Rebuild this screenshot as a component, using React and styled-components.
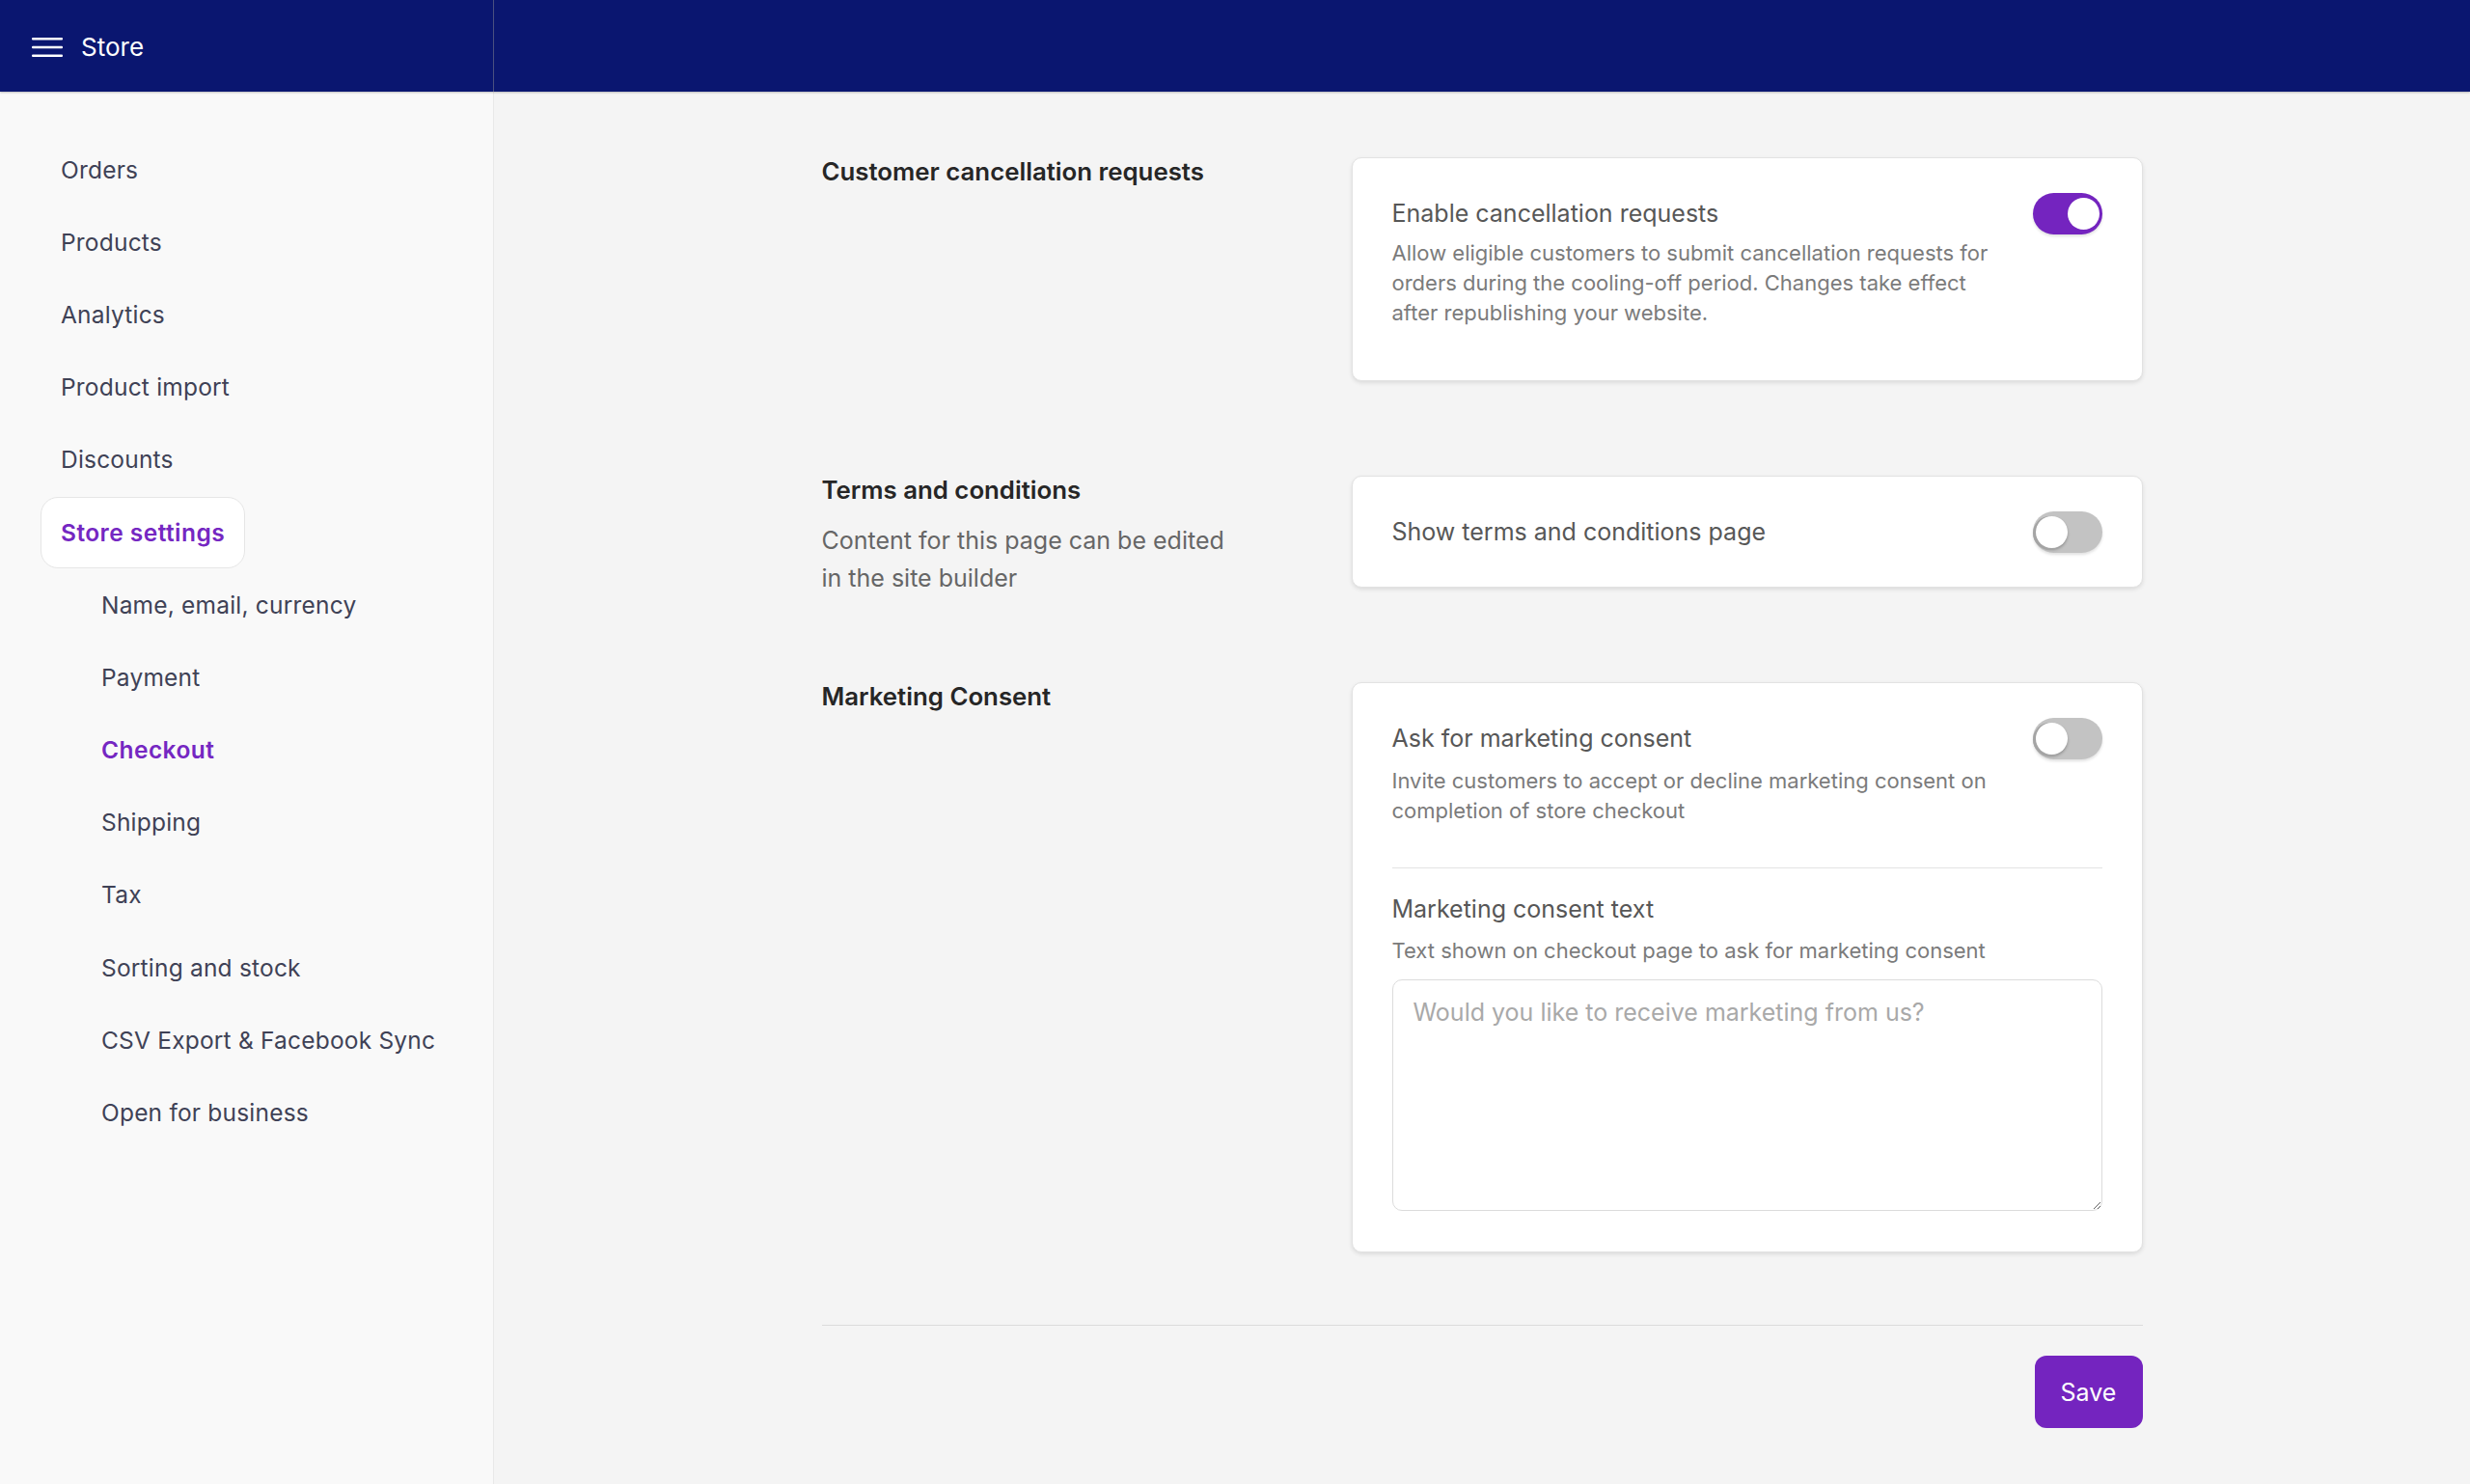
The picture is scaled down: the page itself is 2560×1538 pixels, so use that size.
import React from "react";
import styled, { createGlobalStyle } from "styled-components";

const GlobalStyle = createGlobalStyle`
  * { box-sizing: border-box; }
  html, body { margin: 0; padding: 0; }
  body {
    font-family: Inter, "Noto Sans", "Liberation Sans", sans-serif;
    background: #f4f4f4;
    color: #333;
  }
`;

const Page = styled.div`
  display: grid;
  grid-template-rows: 95px 1fr;
  min-height: 100vh;
`;

const Header = styled.header`
  display: grid;
  grid-template-columns: 512px 1fr;
  background: #0a1670;
  box-shadow: 0 1px 2px rgba(0, 0, 0, 0.25);
  position: relative;
  z-index: 2;
`;

const Brand = styled.div`
  display: flex;
  align-items: center;
  gap: 19px;
  padding: 2px 0 0 33px;
  border-right: 1px solid #4a5080;
  color: #fff;
  font-size: 26px;
`;

const Body = styled.div`
  display: grid;
  grid-template-columns: 512px 1fr;
`;

const Sidebar = styled.nav`
  background: #f9f9f9;
  border-right: 1px solid #e8e8e8;
  padding: 43px 0 0 42px;
  display: flex;
  flex-direction: column;
`;

const NavItem = styled.div`
  height: 75.2px;
  display: flex;
  align-items: center;
  padding-left: ${(p) => (p.$sub ? "62px" : "0")};
  font-size: 24.5px;
  color: ${(p) => (p.$active ? "#7527c2" : "#3f4256")};
  font-weight: ${(p) => (p.$active ? 600 : 400)};
  letter-spacing: ${(p) => (p.$active ? "0.45px" : "0.2px")};
`;

const NavLabel = styled.span`
  display: inline-flex;
  align-items: center;
  height: 74px;
  padding: 0 20px;
  border-radius: 18px;
  background: ${(p) => (p.$pill ? "#ffffff" : "transparent")};
  border: 1px solid ${(p) => (p.$pill ? "#e6e6e6" : "transparent")};
  margin-left: ${(p) => (p.$sub ? "-20px" : "0")};
`;

const Main = styled.main`
  padding: 68px 0 40px;
`;

const Content = styled.div`
  width: 1369px;
  margin: 0 auto;
  display: flex;
  flex-direction: column;
  gap: 98px;
`;

const Section = styled.section`
  display: grid;
  grid-template-columns: 549px 820px;
  align-items: start;
`;

const SectionInfo = styled.div`
  display: flex;
  flex-direction: column;
  gap: 18px;
`;

const SectionTitle = styled.h2`
  margin: 0;
  font-size: 25.8px;
  line-height: 30px;
  font-weight: 600;
  color: #262626;
`;

const SectionText = styled.p`
  margin: 0 0 -20px;
  font-size: 25px;
  line-height: 38.5px;
  color: #666;
  max-width: 440px;
`;

const Card = styled.div`
  background: #fff;
  border: 1px solid #e2e2e2;
  border-radius: 10px;
  box-shadow: 0 2px 4px rgba(0, 0, 0, 0.1);
  padding: 36px 41px ${(p) => p.$pb || "35px"};
`;

const Row = styled.div`
  display: flex;
  align-items: flex-start;
  gap: 40px;
`;

const TextCol = styled.div`
  flex: 1;
  display: flex;
  flex-direction: column;
`;

const FieldTitle = styled.div`
  font-size: 25px;
  line-height: 43px;
  color: #575757;
`;

const FieldDesc = styled.p`
  margin: ${(p) => p.$m || "4px 0 0"};
  font-size: 22px;
  line-height: 31px;
  color: #7b7b7b;
`;

const Divider = styled.hr`
  border: none;
  border-top: 1px solid #e4e4e4;
  margin: 43px 0 27px;
`;

const SubTitle = styled.div`
  font-size: 25px;
  line-height: 30px;
  color: #575757;
`;

const TextArea = styled.textarea`
  display: block;
  width: 100%;
  height: 240px;
  margin-top: 14px;
  padding: 16px 21px;
  border: 1px solid #dcdcdc;
  border-radius: 10px;
  font-family: inherit;
  font-size: 25px;
  line-height: 34px;
  color: #444;
  resize: vertical;
  outline: none;
  &::placeholder { color: #a9a9a9; }
`;

const Track = styled.button`
  flex: none;
  position: relative;
  width: 72px;
  height: 43px;
  border-radius: 22px;
  border: none;
  padding: 0;
  background: ${(p) => (p.$on ? "#7424bf" : "#c3c3c3")};
  box-shadow: 0 2px 3px rgba(0, 0, 0, 0.12);
  cursor: pointer;
`;

const Knob = styled.span`
  position: absolute;
  top: 5px;
  ${(p) => (p.$on ? "right: 3px;" : "left: 3px;")}
  width: 33px;
  height: 33px;
  border-radius: 50%;
  background: #fff;
  box-shadow: ${(p) =>
    p.$on ? "none" : "-2px 1px 0 1px #a4a4a4, 0 2px 3px rgba(0,0,0,0.25)"};
`;

const Footer = styled.div`
  margin-top: -23px;
  border-top: 1px solid #dcdcdc;
  padding-top: 31px;
  display: flex;
  justify-content: flex-end;
`;

const SaveButton = styled.button`
  width: 112px;
  height: 75px;
  border: none;
  border-radius: 12px;
  background: #7424bf;
  color: #fff;
  font-family: inherit;
  font-size: 25px;
  cursor: pointer;
`;

const Toggle = ({ on }) => (
  <Track $on={on} aria-pressed={on}>
    <Knob $on={on} />
  </Track>
);

const MenuIcon = () => (
  <svg width="32" height="20" viewBox="0 0 32 20" fill="none">
    <rect x="0" y="0" width="32" height="2.4" rx="1" fill="#fff" />
    <rect x="0" y="8.8" width="32" height="2.4" rx="1" fill="#fff" />
    <rect x="0" y="17.6" width="32" height="2.4" rx="1" fill="#fff" />
  </svg>
);

const nav = [
  { label: "Orders" },
  { label: "Products" },
  { label: "Analytics" },
  { label: "Product import" },
  { label: "Discounts" },
  { label: "Store settings", active: true, pill: true },
  { label: "Name, email, currency", sub: true },
  { label: "Payment", sub: true },
  { label: "Checkout", sub: true, active: true },
  { label: "Shipping", sub: true },
  { label: "Tax", sub: true },
  { label: "Sorting and stock", sub: true },
  { label: "CSV Export & Facebook Sync", sub: true },
  { label: "Open for business", sub: true },
];

export default function App() {
  return (
    <>
      <GlobalStyle />
      <Page>
        <Header>
          <Brand>
            <MenuIcon />
            <span>Store</span>
          </Brand>
          <div />
        </Header>
        <Body>
          <Sidebar>
            {nav.map((n) => (
              <NavItem key={n.label} $sub={n.sub} $active={n.active}>
                <NavLabel $pill={n.pill} $sub={n.sub}>
                  {n.label}
                </NavLabel>
              </NavItem>
            ))}
          </Sidebar>
          <Main>
            <Content>
              <Section>
                <SectionInfo>
                  <SectionTitle>Customer cancellation requests</SectionTitle>
                </SectionInfo>
                <Card>
                  <Row>
                    <TextCol>
                      <FieldTitle>Enable cancellation requests</FieldTitle>
                      <FieldDesc $m="4px 0 19px">
                        Allow eligible customers to submit cancellation requests for
                        orders during the cooling-off period. Changes take effect
                        after republishing your website.
                      </FieldDesc>
                    </TextCol>
                    <Toggle on />
                  </Row>
                </Card>
              </Section>

              <Section>
                <SectionInfo>
                  <SectionTitle>Terms and conditions</SectionTitle>
                  <SectionText>
                    Content for this page can be edited in the site builder
                  </SectionText>
                </SectionInfo>
                <Card>
                  <Row>
                    <TextCol>
                      <FieldTitle>Show terms and conditions page</FieldTitle>
                    </TextCol>
                    <Toggle on={false} />
                  </Row>
                </Card>
              </Section>

              <Section>
                <SectionInfo>
                  <SectionTitle>Marketing Consent</SectionTitle>
                </SectionInfo>
                <Card $pb="42px">
                  <Row>
                    <TextCol>
                      <FieldTitle>Ask for marketing consent</FieldTitle>
                      <FieldDesc $m="7px 0 0">
                        Invite customers to accept or decline marketing consent on
                        completion of store checkout
                      </FieldDesc>
                    </TextCol>
                    <Toggle on={false} />
                  </Row>
                  <Divider />
                  <SubTitle>Marketing consent text</SubTitle>
                  <FieldDesc $m="13px 0 0">
                    Text shown on checkout page to ask for marketing consent
                  </FieldDesc>
                  <TextArea placeholder="Would you like to receive marketing from us?" />
                </Card>
              </Section>

              <Footer>
                <SaveButton>Save</SaveButton>
              </Footer>
            </Content>
          </Main>
        </Body>
      </Page>
    </>
  );
}
